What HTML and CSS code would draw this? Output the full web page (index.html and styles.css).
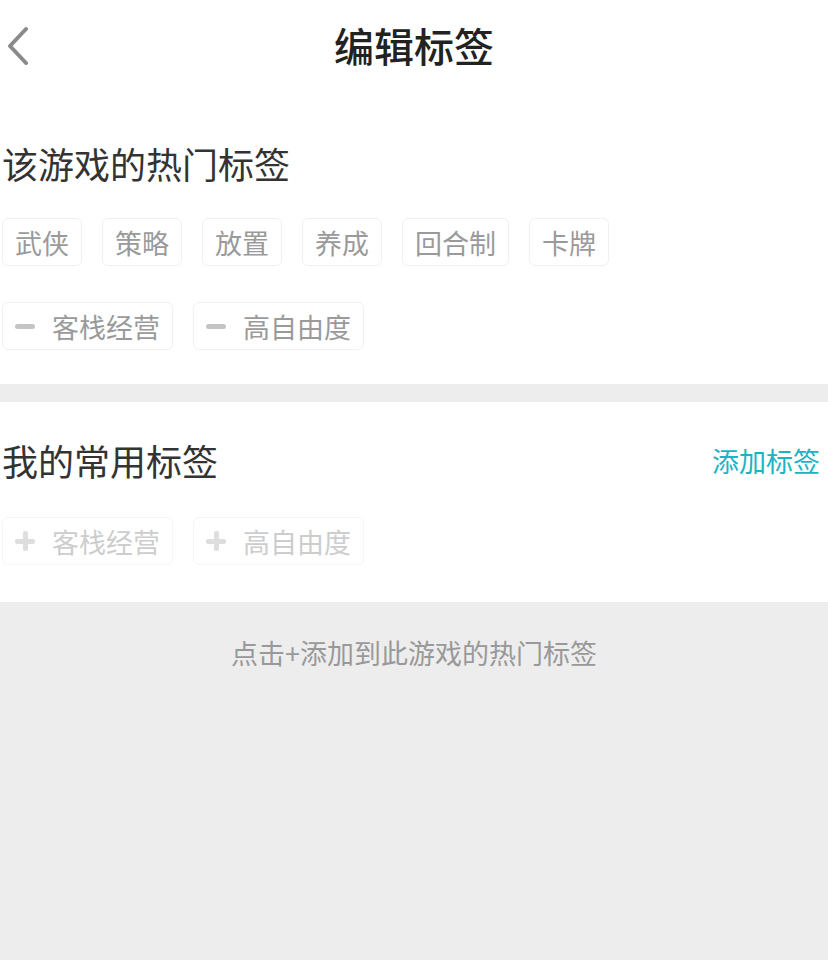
FILE: index.html
```html
<!DOCTYPE html>
<html lang="zh-CN">
<head>
  <meta charset="UTF-8">
  <title>编辑标签</title>
  <link rel="stylesheet" href="styles.css">
</head>
<body>
  <div class="nav">
    <svg class="back" width="30" height="40" viewBox="0 0 30 40">
      <path d="M24 4 L8 21 L24 38" fill="none" stroke="#8a8a8a" stroke-width="4" stroke-linecap="round" stroke-linejoin="round"/>
    </svg>
    <h1>编辑标签</h1>
  </div>

  <div class="section hot">
    <div class="section-head">
      <h2>该游戏的热门标签</h2>
    </div>
    <div class="tags">
      <span class="tag">武侠</span>
      <span class="tag">策略</span>
      <span class="tag">放置</span>
      <span class="tag">养成</span>
      <span class="tag">回合制</span>
      <span class="tag">卡牌</span>
    </div>
    <div class="tags">
      <span class="tag"><i class="minus"></i>客栈经营</span>
      <span class="tag"><i class="minus"></i>高自由度</span>
    </div>
  </div>

  <div class="divider"></div>

  <div class="section mine">
    <div class="section-head">
      <h2>我的常用标签</h2>
      <a class="add-link" href="#">添加标签</a>
    </div>
    <div class="tags">
      <span class="tag light"><i class="plus"></i>客栈经营</span>
      <span class="tag light"><i class="plus"></i>高自由度</span>
    </div>
  </div>

  <div class="footer">
    <p>点击+添加到此游戏的热门标签</p>
  </div>
</body>
</html>
```

FILE: styles.css
```css
body {
  margin: 0;
  font-family: "Noto Sans CJK SC", "Noto Sans", sans-serif;
  background-color: #ededed;
  color: #333;
}

.nav {
  height: 90px;
  background-color: #fff;
  display: flex;
  align-items: center;
  justify-content: center;
  position: relative;
}

.back {
  position: absolute;
  left: 2px;
  top: 25px;
}

h1 {
  margin: 0;
  font-size: 40px;
  font-weight: 500;
  color: #222;
  line-height: 50px;
}

.section {
  background-color: #fff;
}

.hot {
  padding: 48px 0 34px;
}

.mine {
  padding: 33px 0 37px;
}

.section-head {
  display: flex;
  justify-content: space-between;
  align-items: center;
  height: 50px;
  padding: 0 8px 0 2px;
}

h2 {
  margin: 0;
  font-size: 36px;
  font-weight: 400;
  color: #333;
  line-height: 50px;
}

.add-link {
  font-size: 27px;
  color: #19b5c3;
  text-decoration: none;
}

.tags {
  display: flex;
  gap: 20px;
  padding-left: 2px;
  margin-top: 30px;
}

.tags + .tags {
  margin-top: 36px;
}

.mine .tags {
  margin-top: 32px;
}

.tag {
  display: flex;
  align-items: center;
  height: 46px;
  padding: 0 12px;
  border: 1px solid #f0f0f0;
  border-radius: 6px;
  font-size: 27px;
  color: #9a9a9a;
}

.tag.light {
  border-color: #f5f5f5;
  color: #cdcdcd;
}

.minus {
  display: block;
  width: 20px;
  height: 5px;
  border-radius: 3px;
  background-color: #c4c4c4;
  margin-right: 17px;
}

.plus {
  display: block;
  width: 20px;
  height: 20px;
  margin-right: 17px;
  position: relative;
}

.plus::before,
.plus::after {
  content: "";
  position: absolute;
  background-color: #dedede;
  border-radius: 2px;
}

.plus::before {
  left: 0;
  top: 8px;
  width: 20px;
  height: 5px;
}

.plus::after {
  left: 8px;
  top: 0;
  width: 5px;
  height: 20px;
}

.divider {
  height: 18px;
}

.footer {
  text-align: center;
  padding-top: 31px;
}

.footer p {
  margin: 0;
  font-size: 27px;
  line-height: 40px;
  color: #999;
}
```
